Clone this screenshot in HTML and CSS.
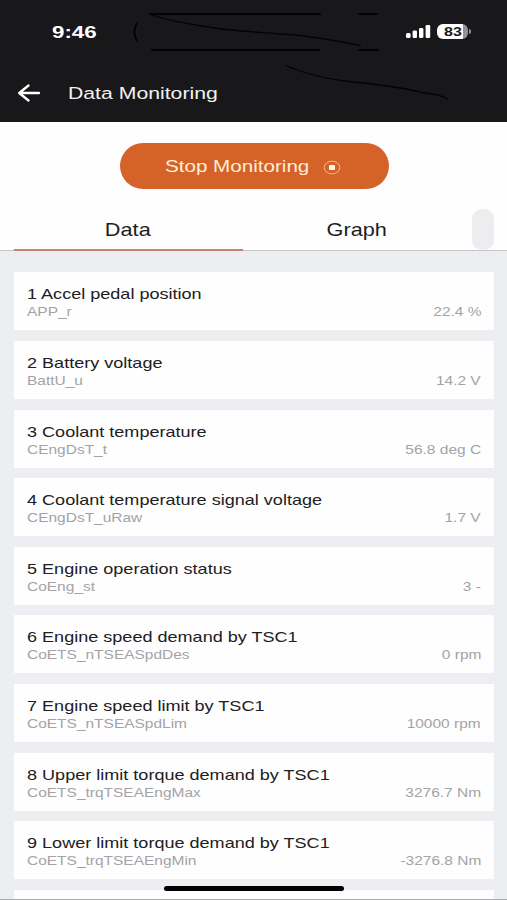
FILE: index.html
```html
<!DOCTYPE html>
<html lang="en">
<head>
<meta charset="utf-8">
<title>Data Monitoring</title>
<link rel="stylesheet" href="styles.css">
</head>
<body>
<div class="screen">
  <header class="top">
    <svg class="island" width="330" height="100" viewBox="130 5 330 100" fill="none" stroke="#030304">
      <path stroke-width="2.2" stroke-linecap="round" d="M150 14H320M359 14H377M152 50H319M359 50H378"/>
      <path stroke-width="2" d="M137 23Q132 32 137 41"/>
      <path stroke-width="1.3" d="M149 14C168 21 190 24 214 28C240 32 278 33 305 36C325 39 347 42 361 46M285 65C302 73 328 79 353 82C382 85 407 88 424 93C436 94 443 96 448 99"/>
    </svg>
    <div class="status">
      <span class="wide time">9:46</span>
      <span class="indicators">
        <svg width="25" height="13" viewBox="0 0 25 13" fill="#fff">
          <rect x="0" y="8" width="4.6" height="5" rx="1.5"/><rect x="6.6" y="5.5" width="4.4" height="7.5" rx="1.3"/><rect x="13" y="3" width="4.4" height="10" rx="1.3"/><rect x="19.6" y="0" width="4.6" height="13" rx="1.3"/>
        </svg>
        <span class="battery"><span class="wide level">83</span></span>
        <span class="battery-tip"></span>
      </span>
    </div>
    <div class="navbar">
      <svg width="24" height="18" viewBox="0 0 24 18" fill="none" stroke="#fff" stroke-width="2.3" stroke-linecap="round" stroke-linejoin="round"><path d="M22 9H2.2M11.5 1.5L2.2 9L11.5 16.5"/></svg>
      <span class="wide nav-title">Data Monitoring</span>
    </div>
  </header>
  <section class="controls">
    <div class="stop">
      <span class="wide stop-label">Stop Monitoring</span>
      <svg class="stop-icon" width="18" height="15" viewBox="0 0 18 15"><ellipse cx="9" cy="7.5" rx="7.8" ry="6.4" fill="none" stroke="#f4b98a" stroke-width="1"/><rect x="6" y="5" width="6" height="5" rx=".8" fill="#fff6e2"/></svg>
    </div>
    <nav class="tabs">
      <div class="tab active"><span class="wide">Data</span></div>
      <div class="tab"><span class="wide">Graph</span></div>
      <div class="pill"></div>
    </nav>
  </section>
  <main class="list">
    <div class="card"><div class="name"><span class="wide">1 Accel pedal position</span></div><div class="detail"><span class="wide">APP_r</span><span class="wide value">22.4 %</span></div></div>
    <div class="card"><div class="name"><span class="wide">2 Battery voltage</span></div><div class="detail"><span class="wide">BattU_u</span><span class="wide value">14.2 V</span></div></div>
    <div class="card"><div class="name"><span class="wide">3 Coolant temperature</span></div><div class="detail"><span class="wide">CEngDsT_t</span><span class="wide value">56.8 deg C</span></div></div>
    <div class="card"><div class="name"><span class="wide">4 Coolant temperature signal voltage</span></div><div class="detail"><span class="wide">CEngDsT_uRaw</span><span class="wide value">1.7 V</span></div></div>
    <div class="card"><div class="name"><span class="wide">5 Engine operation status</span></div><div class="detail"><span class="wide">CoEng_st</span><span class="wide value">3 -</span></div></div>
    <div class="card"><div class="name"><span class="wide">6 Engine speed demand by TSC1</span></div><div class="detail"><span class="wide">CoETS_nTSEASpdDes</span><span class="wide value">0 rpm</span></div></div>
    <div class="card"><div class="name"><span class="wide">7 Engine speed limit by TSC1</span></div><div class="detail"><span class="wide">CoETS_nTSEASpdLim</span><span class="wide value">10000 rpm</span></div></div>
    <div class="card"><div class="name"><span class="wide">8 Upper limit torque demand by TSC1</span></div><div class="detail"><span class="wide">CoETS_trqTSEAEngMax</span><span class="wide value">3276.7 Nm</span></div></div>
    <div class="card"><div class="name"><span class="wide">9 Lower limit torque demand by TSC1</span></div><div class="detail"><span class="wide">CoETS_trqTSEAEngMin</span><span class="wide value">-3276.8 Nm</span></div></div>
    <div class="card"></div>
  </main>
  <div class="home"></div>
</div>
</body>
</html>
```

FILE: styles.css
```css
* { box-sizing: border-box; }
body { margin: 0; font-family: "Liberation Sans", Arial, sans-serif; }
.screen {
  position: relative;
  width: 507px;
  height: 900px;
  overflow: hidden;
  background: #edeef2;
  border-bottom: 1px solid #aaabad;
}
.wide {
  display: inline-block;
  white-space: nowrap;
  transform: scaleX(1.22);
  transform-origin: left center;
}
.top {
  position: relative;
  height: 122px;
  background: #18181a;
  color: #fff;
}
.island { position: absolute; left: 130px; top: 5px; }
.status {
  display: flex;
  justify-content: space-between;
  align-items: center;
  height: 63px;
  padding: 0 36px 0 52px;
}
.time { padding-top: 1px; font-size: 17.3px; font-weight: bold; transform: scaleX(1.29); }
.indicators { display: flex; align-items: center; }
.battery {
  display: flex;
  align-items: center;
  justify-content: center;
  width: 31px;
  height: 15px;
  margin-left: 6px;
  border-radius: 6px;
  background: linear-gradient(90deg, #fff 83%, #929294 83%);
}
.level {
  padding-top: 1px;
  color: #18181a;
  font-size: 12.5px;
  font-weight: bold;
  line-height: 15px;
  transform: scaleX(1.28);
  transform-origin: center;
}
.battery-tip { width: 2px; height: 5px; margin-left: 1px; border-radius: 0 2px 2px 0; background: #929294; }
.navbar { display: flex; align-items: center; height: 60px; padding-left: 17px; }
.nav-title { margin-left: 26.5px; font-size: 17.4px; color: #f2f2f2; }
.controls {
  height: 129px;
  padding: 21px 13px 0 14px;
  background: #fefefe;
  border-bottom: 1px solid #c6c6c9;
}
.stop {
  display: flex;
  align-items: center;
  width: 269px;
  height: 46px;
  margin-left: 106px;
  padding-left: 45px;
  border-radius: 23px;
  background: #d56329;
}
.stop-label { width: 144px; padding-top: 2px; font-size: 16.9px; color: #ffedd4; }
.stop-icon { margin: 2px 0 0 14px; }
.tabs { display: flex; height: 62px; padding-top: 20px; }
.tab {
  display: flex;
  align-items: center;
  justify-content: center;
  width: 229px;
  height: 42px;
  padding: 3px 2px 0 0;
  border-bottom: 2px solid transparent;
  font-size: 17.8px;
  color: #1d1d1f;
}
.tab .wide { transform-origin: center; }
.active { border-bottom-color: #c58270; }
.pill { width: 22px; height: 41px; border-radius: 10px; background: #ededef; }
.list {
  display: flex;
  flex-direction: column;
  gap: 10.6px;
  padding: 21.4px 13px 0 14px;
}
.card {
  flex: none;
  height: 58px;
  padding: 14px 13px 0;
  background: #fefefe;
}
.name { font-size: 14.8px; line-height: 17px; color: #202022; }
.detail {
  display: flex;
  justify-content: space-between;
  padding-top: 1px;
  font-size: 12.7px;
  line-height: 17px;
  color: #a3a3a5;
}
.value { transform-origin: right center; }
.home {
  position: absolute;
  left: 164px;
  top: 886px;
  width: 180px;
  height: 5px;
  border-radius: 3px;
  background: #000;
}
```
